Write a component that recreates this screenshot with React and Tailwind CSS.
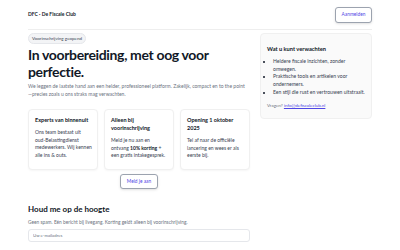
import React from 'react';

const features = [
  {
    title: 'Experts van binnenuit',
    body: <>Ons team bestaat uit <span className="whitespace-nowrap">oud-Belastingdienst</span> medewerkers. Wij kennen alle ins &amp; outs.</>,
  },
  {
    title: 'Alleen bij voorinschrijving',
    body: <>Meld je nu aan en ontvang <strong className="font-bold text-[#111827]">10% korting</strong> + een gratis intakegesprek.</>,
  },
  {
    title: 'Opening 1 oktober 2025',
    body: <>Tel af naar de officiële lancering en wees er als eerste bij.</>,
  },
];

const expectations = [
  'Heldere fiscale inzichten, zonder omwegen.',
  'Praktische tools en artikelen voor ondernemers.',
  'Een stijl die rust en vertrouwen uitstraalt.',
];

export default function App() {
  return (
    <div className="w-[400px] h-[250px] overflow-hidden bg-white px-[28px] font-['Lato',sans-serif] text-[#111827]">
      {/* header */}
      <header className="flex h-[30px] items-center justify-between border-b border-[#eeeeee]">
        <span className="text-[5px] font-bold">DFC · De Fiscale Club</span>
        <button className="h-[16px] w-[37px] rounded-[3px] border border-[#9ca3af] bg-white text-[4.8px] text-[#4f46e5] shadow-sm">
          Aanmelden
        </button>
      </header>

      <main className="grid grid-cols-[222px_112px] gap-[10px] pt-[3px]">
        {/* left column */}
        <div className="flex flex-col">
          <span className="self-start rounded-full border border-[#e5e7eb] bg-[#f3f4f6] px-[3px] py-[2px] text-[4.5px] leading-[5px] text-[#374151]">
            Voorinschrijving geopend
          </span>
          <h1 className="mt-[2px] text-[14px] font-bold leading-[17px] tracking-tight">
            In voorbereiding, met oog voor perfectie.
          </h1>
          <p className="mt-[3px] text-[5px] leading-[7.5px] text-[#6b7280]">
            We leggen de laatste hand aan een helder, professioneel platform. Zakelijk, compact en to the point{' '}
            <span className="whitespace-nowrap">—precies</span> zoals u ons straks mag verwachten.
          </p>

          <div className="mt-[11px] grid grid-cols-3 gap-[6px]">
            {features.map((f) => (
              <div key={f.title} className="h-[61px] rounded-[4px] border border-[#f0f0f0] bg-white px-[5px] py-[6px] shadow-[0_1px_2px_rgba(0,0,0,0.04)]">
                <div className="pl-[1px] text-[5.5px] font-bold leading-[8px]">{f.title}</div>
                <p className="mt-[5px] pl-[1px] text-[5px] leading-[7.5px] text-[#374151]">{f.body}</p>
              </div>
            ))}
          </div>

          <button className="mt-[4px] h-[15px] w-[38px] self-center rounded-[3px] border border-[#9ca3af] bg-white text-[4.8px] text-[#4f46e5] shadow-sm">
            Meld je aan
          </button>

          <h2 className="mt-[15px] text-[8px] font-bold leading-[10px]">Houd me op de hoogte</h2>
          <p className="mt-[5px] text-[4.8px] leading-[7px] text-[#6b7280]">
            Geen spam. Eén bericht bij livegang. Korting geldt alleen bij voorinschrijving.
          </p>
          <input
            className="mt-[3px] h-[13px] w-full rounded-[3px] border border-[#e5e7eb] px-[4px] text-[4.3px] outline-none placeholder:text-[#6b7280]"
            placeholder="Uw e-mailadres"
          />
        </div>

        {/* right card */}
        <aside className="self-start rounded-[4px] border border-[#f0f0f0] bg-[#fafafa] px-[6px] pb-[9px] pt-[11px]">
          <h3 className="text-[5.7px] font-bold leading-[8px]">Wat u kunt verwachten</h3>
          <ul className="mt-[5px] list-disc pl-[6px] text-[5.1px] leading-[7.7px] text-[#374151] marker:text-[#111827]">
            {expectations.map((e) => (
              <li key={e}>{e}</li>
            ))}
          </ul>
          <p className="mt-[5px] text-[4.5px] leading-[7px] text-[#6b7280]">
            Vragen?{' '}
            <a href="#" className="text-[#4f46e5] underline">info@defiscaleclub.nl</a>
          </p>
        </aside>
      </main>
    </div>
  );
}
